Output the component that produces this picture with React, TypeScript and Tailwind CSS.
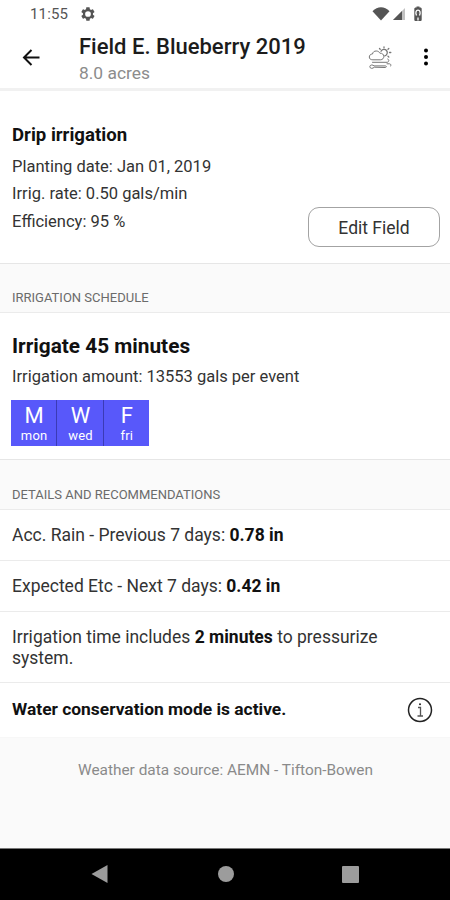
import type { ReactNode } from "react";

const days = [
  { letter: "M", label: "mon" },
  { letter: "W", label: "wed" },
  { letter: "F", label: "fri" },
];

export default function App() {
  return (
    <div className="flex h-[900px] w-[450px] flex-col overflow-hidden bg-[#fafafa] font-['Roboto',sans-serif] text-[#333]">
      <StatusBar />
      <AppBar />

      <main className="flex-1">
        <FieldSummary />
        <SectionHeader className="h-[49px] pt-6">IRRIGATION SCHEDULE</SectionHeader>
        <Schedule />
        <SectionHeader className="h-[50px] pt-[25px]">DETAILS AND RECOMMENDATIONS</SectionHeader>
        <DetailRow className="h-[51px]">
          Acc. Rain - Previous 7 days: <b className="font-bold text-[#111]">0.78 in</b>
        </DetailRow>
        <DetailRow className="h-[51px]">
          Expected Etc - Next 7 days: <b className="font-bold text-[#111]">0.42 in</b>
        </DetailRow>
        <DetailRow className="h-[71px] pt-px">
          Irrigation time includes <b className="font-bold text-[#111]">2 minutes</b> to pressurize
          system.
        </DetailRow>
        <div className="flex h-[55px] items-center justify-between border-b border-[#f7f7f7] bg-white pr-[17px] pl-3">
          <p className="pb-0.5 text-[17.4px] leading-[24px] font-bold text-[#111]">
            Water conservation mode is active.
          </p>
          <InfoIcon />
        </div>
        <p className="pt-5 pl-px text-center text-[15.4px] leading-[24px] text-[#8a8a8a]">
          Weather data source: AEMN - Tifton-Bowen
        </p>
      </main>

      <NavigationBar />
    </div>
  );
}

function StatusBar() {
  return (
    <div className="flex h-7 items-center bg-white pr-[27px] pl-[30px] text-[#555]">
      <span className="text-[15px] leading-[28px] tracking-[0.15px]">11:55</span>
      <svg viewBox="0 0 24 24" className="ml-[12px] size-4" fill="currentColor">
        <path
          fillRule="evenodd"
          d="M19.4 13c.1-.3.1-.7.1-1s0-.7-.1-1l2.1-1.6c.2-.2.3-.4.1-.7l-2-3.4c-.1-.3-.4-.3-.6-.3l-2.5 1a7 7 0 0 0-1.7-1l-.4-2.6c0-.3-.2-.4-.5-.4h-4c-.3 0-.5.1-.5.4L9 5a7 7 0 0 0-1.7 1l-2.5-1c-.2 0-.5 0-.6.3l-2 3.4c-.2.3-.1.5.1.7L4.5 11c-.1.3-.1.7-.1 1s0 .7.1 1l-2.2 1.6c-.2.2-.3.4-.1.7l2 3.4c.1.3.4.3.6.3l2.5-1c.5.4 1.1.8 1.7 1l.4 2.6c0 .3.2.4.5.4h4c.3 0 .5-.1.5-.4l.4-2.6c.6-.2 1.2-.6 1.7-1l2.5 1c.2 0 .5 0 .6-.3l2-3.4c.2-.3.1-.5-.1-.7zM12 16.3a4.3 4.3 0 1 1 0-8.6 4.3 4.3 0 0 1 0 8.6z"
        />
      </svg>
      <div className="ml-auto flex items-center">
        <svg viewBox="0 0 18 14" className="h-[14px] w-[18px]" fill="currentColor">
          <path d="M.5 4.2C3 1.6 6 .3 9 .3s6 1.3 8.5 3.9L9 13.5z" />
        </svg>
        <svg viewBox="0 0 14 14" className="ml-[2px] h-[14px] w-[14px]">
          <path d="M13 1v12H1z" fill="#c2c2c2" />
          <path d="M10 4v9H1z" fill="currentColor" />
        </svg>
        <svg viewBox="0 0 10 16" className="ml-[7px] h-4 w-[10px]">
          <path
            d="M3 1.5h.5V.5h3v1h.7c1 0 1.5.5 1.5 1.5v10.5c0 1-.5 1.500-1.500 1.500H2.800c-1 0-1.500-.5-1.500-1.500V3c0-1 .5-1.500 1.700-1.500z"
            fill="currentColor"
          />
          <path
            d="M3.5 9.5C2.2 6.5 3 4.2 5 4.2s2.8 2.300 1.500 5.300M5 11.500v3"
            fill="none"
            stroke="#fff"
            strokeWidth="1.3"
          />
        </svg>
      </div>
    </div>
  );
}

function AppBar() {
  return (
    <header className="flex h-[63px] items-start border-b-3 border-[#f1f1f1] bg-white pt-[6px] pr-[22px] pl-[21px]">
      <svg viewBox="0 0 20 20" className="mt-[13px] h-5 w-5" fill="none" stroke="#111" strokeWidth="2">
        <path d="M18.5 10.5H3M10.5 3L3 10.5l7.5 7.5" />
      </svg>
      <div className="ml-[38px]">
        <h1 className="text-[22px] leading-[26px] font-medium text-[#1c1c1c]">Field E. Blueberry 2019</h1>
        <p className="text-[17.4px] leading-[26px] text-[#8c8c8c]">8.0 acres</p>
      </div>
      <WeatherIcon />
      <svg viewBox="0 0 4 18" className="mt-[14px] ml-[32px] h-[18px] w-1" fill="#000">
        <circle cx="2" cy="2.5" r="2" />
        <circle cx="2" cy="9" r="2" />
        <circle cx="2" cy="15.5" r="2" />
      </svg>
    </header>
  );
}

// sun behind a cloud, with two wind streams below
function WeatherIcon() {
  return (
    <svg
      viewBox="0 0 24 24"
      className="mt-[12px] ml-auto size-6"
      fill="none"
      stroke="#777"
      strokeLinecap="round"
      strokeLinejoin="round"
    >
      <path d="M4.5 13.8c-2 0-3.2-1-3.2-2.8s1.4-3 3.2-3C4.8 6 6.3 5 8.2 5c1.7 0 3 .8 3.7 2.2 2.3-.2 3.9 1.2 3.9 3.3 0 1.6-1.2 3.3-3 3.3z" />
      <path d="M13 5.2a3.3 3.3 0 1 1 3.8 4.6" strokeWidth="1.3" />
      <path d="M16 .8v1M11.5 2.5l.7.7M20.8 2.5l-.8.7M21.5 6.5h1.3M20 10.3l.8.7" strokeWidth="1.3" />
      <path d="M4.5 16.3H19c2 0 2.5-3 .8-3.3" />
      <path d="M19 17.8h2.5c1.2 0 1.7 1.2 1.2 2.2" />
      <path d="M6 21.5c-1 1.3-4.2 1.3-4.2-.8s3.2-2.1 4.2-.8h11.5c1.2 0 1.2 1.6 0 1.6z" />
    </svg>
  );
}

function FieldSummary() {
  return (
    <section className="flex h-[173px] items-end justify-between border-b border-[#e6e6e6] bg-white pr-[10px] pl-3">
      <div className="pb-[28px]">
        <h2 className="mb-1 text-[18.6px] leading-[28px] font-bold text-[#111]">Drip irrigation</h2>
        <div className="text-[16.5px] leading-[27.5px]">
          <p>Planting date: Jan 01, 2019</p>
          <p>Irrig. rate: 0.50 gals/min</p>
          <p>Efficiency: 95 %</p>
        </div>
      </div>
      <button className="mb-4 h-10 w-[132px] rounded-[11px] border border-[#a3a3a3] bg-white pt-px text-[17.5px] leading-[38px]">
        Edit Field
      </button>
    </section>
  );
}

function Schedule() {
  return (
    <section className="h-[147px] border-b border-[#e6e6e6] bg-white px-3 pt-[18px]">
      <h2 className="text-[20.8px] leading-[30px] font-bold text-[#111]">Irrigate 45 minutes</h2>
      <p className="pt-px text-[16.5px] leading-[30px]">Irrigation amount: 13553 gals per event</p>
      <div className="mt-2 -ml-px flex h-[46px] w-[138px] divide-x divide-[#3b3bb5] bg-[#5858fa] text-white">
        {days.map((day) => (
          <div key={day.label} className="flex flex-1 flex-col items-center pt-[5px] pl-px">
            <span className="text-[22px] leading-[22px]">{day.letter}</span>
            <span className="text-[13px] leading-[18px] tracking-[0.2px]">{day.label}</span>
          </div>
        ))}
      </div>
    </section>
  );
}

function SectionHeader({ children, className }: { children: ReactNode; className: string }) {
  return (
    <div className={`border-b border-[#ebebeb] px-3 ${className}`}>
      <h3 className="text-[13px] leading-[20px] text-[#6b6b6b]">{children}</h3>
    </div>
  );
}

function DetailRow({ children, className }: { children: ReactNode; className: string }) {
  return (
    <div className={`flex items-center border-b border-[#ebebeb] bg-white px-3 ${className}`}>
      <p className="w-[390px] text-[17.5px] leading-[21px]">{children}</p>
    </div>
  );
}

function InfoIcon() {
  return (
    <svg viewBox="0 0 26 26" className="size-[26px]" fill="none" stroke="#222" strokeWidth="1.5">
      <circle cx="13" cy="13" r="11.5" />
      <path d="M11 10.5h2.5V19M10.5 19h5.5" stroke="#555" strokeWidth="1.3" />
      <circle cx="13" cy="7.2" r="1" fill="#222" stroke="none" />
    </svg>
  );
}

function NavigationBar() {
  return (
    <nav className="flex h-[52px] items-center justify-between border-t border-[#777] bg-black pr-[91px] pb-px pl-[91px]">
      <svg viewBox="0 0 18 18" className="h-[18px] w-[18px]" fill="#9c9c9c">
        <path d="M16.5 0v18L.5 9z" />
      </svg>
      <div className="size-4 rounded-full bg-[#9c9c9c]" />
      <div className="size-[17px] rounded-[1px] bg-[#9c9c9c]" />
    </nav>
  );
}
